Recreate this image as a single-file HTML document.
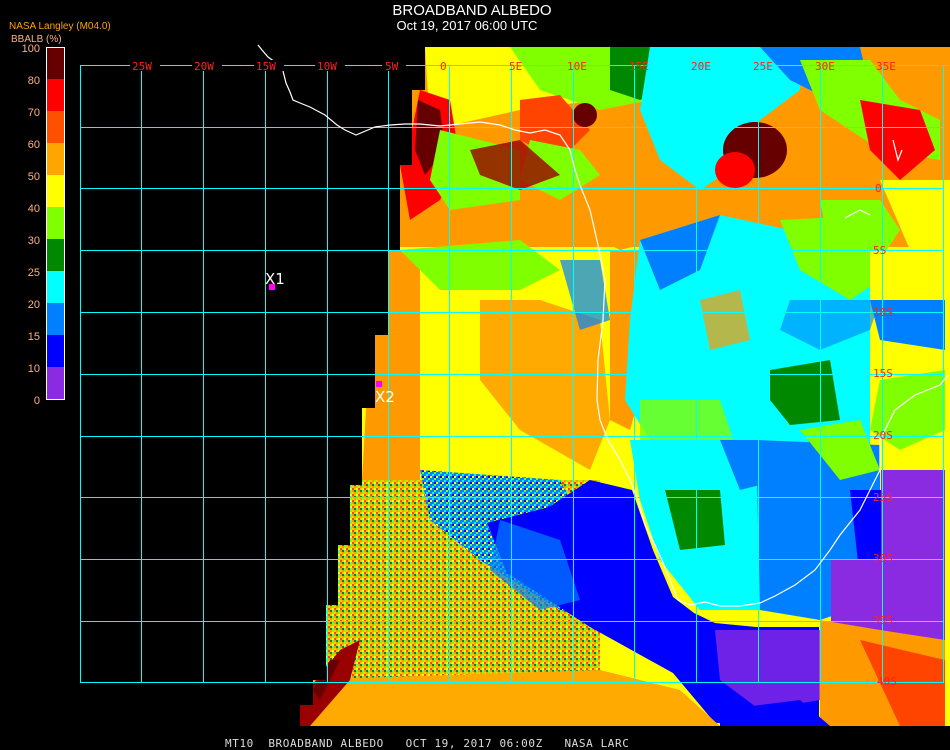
<!DOCTYPE html>
<html><head><meta charset="utf-8"><style>
html,body{margin:0;padding:0;background:#000;width:950px;height:750px;overflow:hidden}
svg{display:block}
</style></head><body>
<svg width="950" height="750" viewBox="0 0 950 750" xmlns="http://www.w3.org/2000/svg">
<defs>
<clipPath id="d">
<polygon points="425,47 950,47 950,726 300,726 300,705 313,705 313,680 326,680 326,605 338,605 338,545 350,545 350,485 362,485 362,408 375,408 375,335 388,335 388,250 400,250 400,165 412,165 412,90 425,90"/>
</clipPath>
<pattern id="sp" width="6" height="6" patternUnits="userSpaceOnUse">
<rect width="6" height="6" fill="#ffcc00"/>
<rect x="0" y="0" width="2" height="2" fill="#ff9900"/><rect x="2" y="0" width="2" height="2" fill="#80ff00"/><rect x="4" y="2" width="2" height="2" fill="#ff4400"/><rect x="0" y="4" width="2" height="2" fill="#008800"/><rect x="2" y="2" width="2" height="2" fill="#ffff00"/><rect x="4" y="4" width="2" height="2" fill="#ff9900"/><rect x="2" y="4" width="2" height="2" fill="#00ffff" opacity="0.5"/>
</pattern>
<pattern id="sp2" width="6" height="6" patternUnits="userSpaceOnUse">
<rect width="6" height="6" fill="#0080ff"/>
<rect x="0" y="0" width="2" height="2" fill="#00ffff"/><rect x="4" y="2" width="2" height="2" fill="#ffff00"/><rect x="2" y="4" width="2" height="2" fill="#80ff00"/><rect x="2" y="2" width="2" height="2" fill="#0000ff"/>
</pattern>
</defs>
<g clip-path="url(#d)">
<rect x="290" y="40" width="660" height="690" fill="#ffff00"/>
<rect x="400" y="47" width="550" height="200" fill="#ff9900"/>
<polygon points="425,47 600,47 600,100 520,110 430,130" fill="#ffff00"/>
<polygon points="510,47 600,47 620,47 650,47 650,100 600,110 540,90" fill="#80ff00"/>
<polygon points="610,47 650,47 660,90 640,100 610,90" fill="#008800"/>
<polygon points="650,47 800,47 800,90 760,120 730,170 700,190 660,160 640,110" fill="#00ffff"/>
<polygon points="760,47 860,47 870,90 820,95 790,80" fill="#0080ff"/>
<polygon points="800,60 870,60 900,100 940,120 940,160 880,150 820,110" fill="#80ff00"/>
<polygon points="420,90 450,100 460,160 440,200 410,220 400,165 412,130" fill="#ff0000"/>
<polygon points="418,100 440,110 445,150 425,175 415,150" fill="#660000"/>
<polygon points="520,100 560,95 590,130 560,160 520,140" fill="#ff4400"/>
<polygon points="530,140 580,150 600,175 560,200 520,180" fill="#80ff00"/>
<polygon points="440,130 520,150 520,200 450,210 430,180" fill="#80ff00"/>
<polygon points="470,150 520,140 560,175 520,190 480,175" fill="#990000" opacity="0.8"/>
<ellipse cx="755" cy="150" rx="32" ry="28" fill="#660000"/>
<ellipse cx="735" cy="170" rx="20" ry="18" fill="#ff0000"/>
<polygon points="860,100 920,110 935,150 900,180 870,150" fill="#ff0000"/>
<ellipse cx="585" cy="115" rx="12" ry="12" fill="#660000"/>
<polygon points="580,190 650,200 660,240 620,250 580,230" fill="#ff9900"/>
<polygon points="820,200 880,200 900,230 880,260 830,250" fill="#80ff00"/>
<polygon points="880,180 950,180 950,260 910,250" fill="#ffff00"/>
<rect x="375" y="250" width="230" height="240" fill="#ffff00"/>
<polygon points="375,250 420,250 420,480 362,480" fill="#ff9900"/>
<polygon points="400,250 520,240 560,270 520,290 440,290" fill="#80ff00"/>
<polygon points="480,300 540,300 600,320 610,420 590,470 520,430 480,380" fill="#ffaa00"/>
<polygon points="560,260 600,260 610,320 580,330" fill="#0080ff" opacity="0.7"/>
<polygon points="610,250 640,250 650,360 630,430 610,420" fill="#ff9900"/>
<polygon points="640,240 720,215 790,230 870,230 880,300 870,380 870,470 820,480 760,470 700,460 650,440 625,400 630,320" fill="#00ffff"/>
<polygon points="640,240 720,215 700,270 660,290" fill="#0080ff"/>
<polygon points="780,220 880,215 880,280 850,300 800,270" fill="#80ff00"/>
<polygon points="870,250 945,250 945,380 900,400 870,380" fill="#ffff00"/>
<polygon points="870,300 945,300 945,350 880,340" fill="#0080ff"/>
<polygon points="790,300 880,300 870,330 820,350 780,330" fill="#0080ff" opacity="0.6"/>
<polygon points="770,370 830,360 840,420 790,425 770,400" fill="#008800"/>
<polygon points="700,300 740,290 750,340 710,350" fill="#ff9900" opacity="0.7"/>
<polygon points="880,380 945,370 945,430 900,450 870,430" fill="#80ff00"/>
<polygon points="640,400 720,400 740,460 680,480 640,460" fill="#80ff00" opacity="0.8"/>
<polygon points="630,440 760,440 760,610 700,610 660,560 640,500" fill="#00ffff"/>
<polygon points="665,490 720,490 725,545 680,550" fill="#008800"/>
<polygon points="756,440 880,445 880,600 820,620 760,610" fill="#0080ff"/>
<polygon points="720,440 760,440 780,480 740,490" fill="#0080ff"/>
<polygon points="800,430 860,420 880,470 840,480" fill="#80ff00"/>
<polygon points="881,470 945,470 945,700 881,700" fill="#8a2be2"/>
<polygon points="850,490 881,490 881,600 860,580" fill="#0000ff"/>
<polygon points="831,560 881,560 881,630 831,630" fill="#8a2be2"/>
<polygon points="300,480 600,480 600,690 300,690" fill="url(#sp)"/>
<polygon points="420,470 560,480 600,560 620,620 560,610 480,560 430,520" fill="url(#sp2)"/>
<polygon points="590,480 632,490 653,550 673,597 694,613 715,623 756,627 819,627 819,723 715,723 673,673 590,627 507,573 487,523 549,507" fill="#0000ff"/>
<polygon points="500,520 560,540 580,600 540,610 490,570" fill="#0080ff" opacity="0.7"/>
<polygon points="715,630 820,630 820,700 760,710 720,680" fill="#8a2be2" opacity="0.8"/>
<polygon points="300,680 600,670 680,690 720,726 300,726" fill="#ffaa00"/>
<polygon points="820,620 880,630 945,640 945,726 820,726" fill="#ff9900"/>
<polygon points="860,640 945,660 945,726 900,726" fill="#ff4400"/>
<polygon points="720,710 800,700 830,726 720,726" fill="#0000ff"/>
<polygon points="300,700 340,650 360,640 350,680 310,726 300,726" fill="#990000"/>
<polygon points="313,690 330,660 340,660 320,700" fill="#660000"/>
</g>
<g stroke="#00ffff" stroke-width="1" shape-rendering="crispEdges">
<line x1="80" y1="65.5" x2="950" y2="65.5"/>
<line x1="80" y1="127.5" x2="944" y2="127.5"/>
<line x1="80" y1="188.5" x2="944" y2="188.5"/>
<line x1="80" y1="250.5" x2="944" y2="250.5"/>
<line x1="80" y1="312.5" x2="944" y2="312.5"/>
<line x1="80" y1="374.5" x2="944" y2="374.5"/>
<line x1="80" y1="436.5" x2="944" y2="436.5"/>
<line x1="80" y1="497.5" x2="944" y2="497.5"/>
<line x1="80" y1="559.5" x2="944" y2="559.5"/>
<line x1="80" y1="621.5" x2="944" y2="621.5"/>
<line x1="80" y1="682.5" x2="944" y2="682.5"/>
<line x1="80.5" y1="65" x2="80.5" y2="683"/>
<line x1="141.5" y1="65" x2="141.5" y2="683"/>
<line x1="203.5" y1="65" x2="203.5" y2="683"/>
<line x1="265.5" y1="65" x2="265.5" y2="683"/>
<line x1="327.5" y1="65" x2="327.5" y2="683"/>
<line x1="388.5" y1="65" x2="388.5" y2="683"/>
<line x1="449.5" y1="65" x2="449.5" y2="683"/>
<line x1="511.5" y1="65" x2="511.5" y2="683"/>
<line x1="573.5" y1="65" x2="573.5" y2="683"/>
<line x1="634.5" y1="65" x2="634.5" y2="683"/>
<line x1="696.5" y1="65" x2="696.5" y2="683"/>
<line x1="758.5" y1="65" x2="758.5" y2="683"/>
<line x1="820.5" y1="65" x2="820.5" y2="683"/>
<line x1="882.5" y1="65" x2="882.5" y2="683"/>
<line x1="943.5" y1="65" x2="943.5" y2="683"/>
</g>
<g fill="none" stroke="#fff" stroke-width="1.2">
<polyline points="258,45 262,50 268,57 282,67 286,83 290,92 293,100 300,103 310,107 325,115 337,125 345,130 356,135 375,127 390,125 405,124 420,124 440,126 460,124 480,122 500,125 515,130 530,133 545,130 560,135 570,150 575,170 580,185 590,210 598,245 605,280 603,320 598,360 597,400 600,420 608,440 620,460 630,480 638,500 645,525 655,545 662,560 670,580 678,600 690,605 705,602 720,606 740,606 760,603 775,596 795,585 815,570 830,550 840,535 860,510 870,490 880,470 880,440 895,410 915,395 940,385 948,375"/>
<polyline points="893,140 898,160 902,150"/>
<polyline points="845,218 860,210 870,215"/>
</g>
<g font-family="'DejaVu Sans Mono','Liberation Mono',monospace" font-size="11" fill="#ff2020">
<g fill="#000"><rect x="130" y="60" width="30" height="11"/><rect x="192" y="60" width="30" height="11"/><rect x="254" y="60" width="30" height="11"/><rect x="315" y="60" width="30" height="11"/><rect x="382" y="60" width="24" height="11"/></g>
<text x="132" y="70">25W</text><text x="194" y="70">20W</text><text x="256" y="70">15W</text><text x="317" y="70">10W</text><text x="385" y="70">5W</text>
<text x="440" y="70">0</text><text x="509" y="70">5E</text><text x="567" y="70">10E</text><text x="629" y="70">15E</text><text x="691" y="70">20E</text><text x="753" y="70">25E</text><text x="815" y="70">30E</text><text x="876" y="70">35E</text>
<text x="875" y="192">0</text><text x="873" y="254">5S</text><text x="873" y="316">10S</text><text x="873" y="377">15S</text><text x="873" y="439">20S</text><text x="873" y="501">25S</text><text x="873" y="562">30S</text><text x="873" y="624">35S</text><text x="877" y="685">40S</text>
</g>
<rect x="269" y="284" width="6" height="6" fill="#ff00ff"/>
<text x="265" y="284" font-family="'DejaVu Sans','Liberation Sans',sans-serif" font-size="15" fill="#fff">X1</text>
<rect x="376" y="381" width="6" height="6" fill="#ff00ff"/>
<text x="375" y="402" font-family="'DejaVu Sans','Liberation Sans',sans-serif" font-size="15" fill="#fff">X2</text>
<text x="472" y="15" text-anchor="middle" font-family="'Liberation Sans',sans-serif" font-size="15" fill="#fff">BROADBAND ALBEDO</text>
<text x="467" y="30" text-anchor="middle" font-family="'Liberation Sans',sans-serif" font-size="13" fill="#fff">Oct 19, 2017 06:00 UTC</text>
<text x="9" y="29" font-family="'Liberation Sans',sans-serif" font-size="10" fill="#ffa500">NASA Langley (M04.0)</text>
<text x="11" y="42" font-family="'Liberation Sans',sans-serif" font-size="10" fill="#ffb080">BBALB (%)</text>
<g shape-rendering="crispEdges">
<rect x="46" y="47" width="19" height="32" fill="#660000"/>
<rect x="46" y="79" width="19" height="32" fill="#ff0000"/>
<rect x="46" y="111" width="19" height="32" fill="#ff5000"/>
<rect x="46" y="143" width="19" height="32" fill="#ffa500"/>
<rect x="46" y="175" width="19" height="32" fill="#ffff00"/>
<rect x="46" y="207" width="19" height="32" fill="#80ff00"/>
<rect x="46" y="239" width="19" height="32" fill="#008800"/>
<rect x="46" y="271" width="19" height="32" fill="#00ffff"/>
<rect x="46" y="303" width="19" height="32" fill="#0080ff"/>
<rect x="46" y="335" width="19" height="32" fill="#0000ff"/>
<rect x="46" y="367" width="19" height="33" fill="#8a2be2"/>
<rect x="46.5" y="47.5" width="18" height="352" fill="none" stroke="#fff"/>
</g>
<g font-family="'Liberation Sans',sans-serif" font-size="11" fill="#ffb080" text-anchor="end">
<text x="40" y="52">100</text><text x="40" y="84">80</text><text x="40" y="116">70</text><text x="40" y="148">60</text><text x="40" y="180">50</text><text x="40" y="212">40</text><text x="40" y="244">30</text><text x="40" y="276">25</text><text x="40" y="308">20</text><text x="40" y="340">15</text><text x="40" y="372">10</text><text x="40" y="404">0</text>
</g>
<text x="225" y="747" font-family="'DejaVu Sans Mono','Liberation Mono',monospace" font-size="11" fill="#ddd" xml:space="preserve" letter-spacing="0.6">MT10  BROADBAND ALBEDO   OCT 19, 2017 06:00Z   NASA LARC</text>
</svg>
</body></html>
